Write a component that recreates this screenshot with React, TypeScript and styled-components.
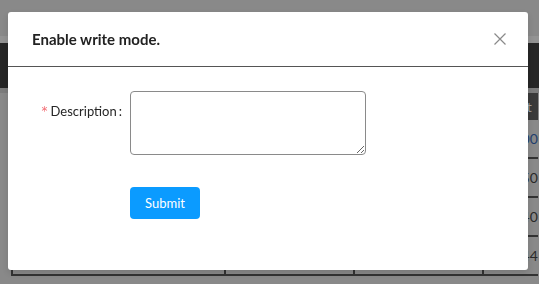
import React from "react";
import styled, { createGlobalStyle } from "styled-components";

const GlobalStyle = createGlobalStyle`
  html, body {
    margin: 0;
    padding: 0;
    overflow: hidden;
  }
  body {
    font-family: Lato, "Open Sans", "DejaVu Sans", sans-serif;
  }
  * {
    box-sizing: border-box;
  }
`;

/* ---------- dimmed page behind the modal ---------- */

const Page = styled.div`
  width: 100%;
  height: 284px;
  background: #898989;
  display: flex;
  flex-direction: column;
  overflow: hidden;
`;

const TopSpace = styled.div`
  height: 36px;
  background: #898989;
`;

const TopStrip = styled.div`
  height: 7px;
  background: #939393;
`;

const NavBar = styled.div`
  height: 45px;
  background: #262626;
`;

const NavGap = styled.div`
  height: 5px;
  background: #7c7c7c;
`;

const Table = styled.div`
  display: flex;
  flex-direction: column;
  margin-left: 11px;
  width: 527px;
`;

const TableRow = styled.div<{ $head?: boolean }>`
  display: grid;
  grid-template-columns: 213px 129px 129px 1fr;
  flex-shrink: 0;
  height: ${(p) => (p.$head ? "27px" : "39px")};
  background: ${(p) => (p.$head ? "#3a3a3a" : "#898989")};
  border-bottom: ${(p) => (p.$head ? "none" : "2px solid #333")};
`;

const Cell = styled.div<{ $color?: string }>`
  border-left: 2px solid #333;
  display: flex;
  align-items: center;
  padding-left: 10px;
  font-size: 14px;
  color: ${(p) => p.$color || "#2a2a2a"};
  white-space: nowrap;
  overflow: hidden;
`;

const HeadCell = styled(Cell)`
  border-left: none;
  color: #a0a0a0;
  padding-left: 12px;
`;

/* ---------- modal ---------- */

const Modal = styled.div`
  position: fixed;
  top: 12px;
  left: 8px;
  width: 520px;
  background: #fff;
  border-radius: 3px;
  box-shadow: 0 3px 6px rgba(0, 0, 0, 0.12);
`;

const Header = styled.div`
  position: relative;
  padding: 16px 24px;
  border-bottom: 1px solid #555;
`;

const Title = styled.div`
  font-size: 15px;
  font-weight: 700;
  line-height: 22px;
  color: #222;
`;

const CloseButton = styled.button`
  position: absolute;
  top: 0;
  right: 0;
  width: 56px;
  height: 54px;
  border: none;
  background: transparent;
  display: flex;
  align-items: center;
  justify-content: center;
  color: #8a8a8a;
  padding: 0;
  cursor: pointer;
`;

const Body = styled.div`
  padding: 24px 24px 51px;
`;

const FormItem = styled.div`
  display: grid;
  grid-template-columns: 98px 236px;
  align-items: start;
`;

const Label = styled.label`
  height: 40px;
  display: flex;
  align-items: center;
  justify-content: flex-end;
  font-size: 13px;
  color: #262626;
`;

const Required = styled.span`
  color: #f36d74;
  margin-right: 3px;
  font-family: "DejaVu Sans", sans-serif;
  font-size: 12px;
`;

const Colon = styled.span`
  margin: 0 8px 0 2px;
`;

const TextArea = styled.textarea`
  width: 236px;
  height: 64px;
  border: 1px solid #8a8a8a;
  border-radius: 4px;
  display: block;
  font-family: inherit;
  font-size: 14px;
`;

const Actions = styled.div`
  padding-left: 98px;
  margin-top: 32px;
`;

const SubmitButton = styled.button`
  height: 32px;
  width: 70px;
  border: none;
  border-radius: 4px;
  background: #0b9bff;
  color: #fff;
  font-family: inherit;
  font-size: 13px;
  padding: 0;
  cursor: pointer;
`;

const rows = ["12,000", "11,150", "11,140", "11,144"];

export default function App() {
  return (
    <>
      <GlobalStyle />
      <Page>
        <TopSpace />
        <TopStrip />
        <NavBar />
        <NavGap />
        <Table>
          <TableRow $head>
            <HeadCell />
            <HeadCell />
            <HeadCell />
            <HeadCell>Count</HeadCell>
          </TableRow>
          {rows.map((r, i) => (
            <TableRow key={i}>
              <Cell />
              <Cell />
              <Cell />
              <Cell $color={i === 0 ? "#1f3f6e" : undefined}>{r}</Cell>
            </TableRow>
          ))}
        </Table>
      </Page>

      <Modal>
        <Header>
          <Title>Enable write mode.</Title>
          <CloseButton aria-label="Close">
            <svg width="14" height="14" viewBox="0 0 14 14" fill="none">
              <path d="M1.5 1.5 L12.5 12.5 M12.5 1.5 L1.5 12.5" stroke="currentColor" strokeWidth="1.2" />
            </svg>
          </CloseButton>
        </Header>
        <Body>
          <FormItem>
            <Label>
              <Required>*</Required>
              Description
              <Colon>:</Colon>
            </Label>
            <TextArea />
          </FormItem>
          <Actions>
            <SubmitButton>Submit</SubmitButton>
          </Actions>
        </Body>
      </Modal>
    </>
  );
}
